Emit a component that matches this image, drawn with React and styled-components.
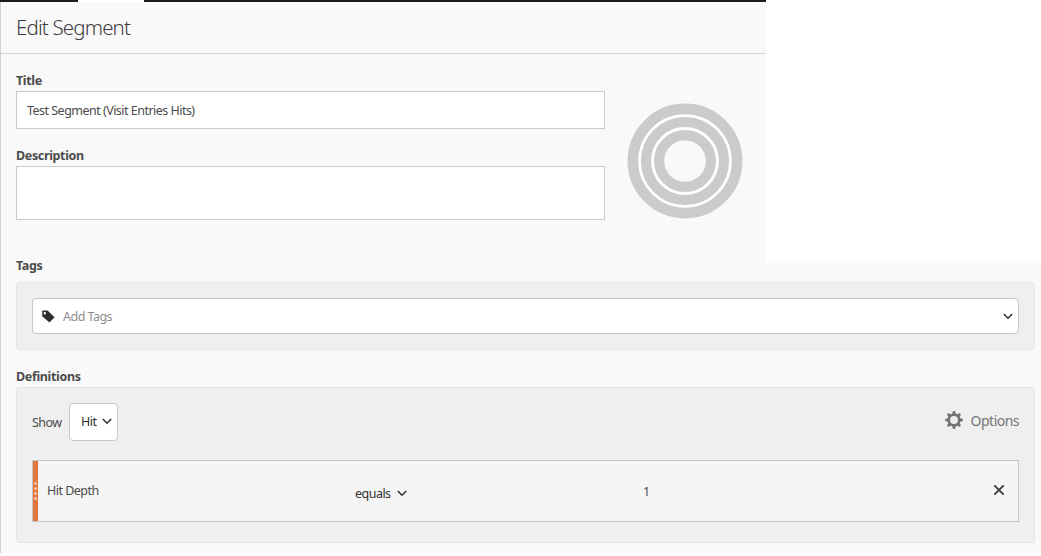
import React from 'react';
import styled, { createGlobalStyle, css } from 'styled-components';

function Chevron() {
  return (
    <svg width="10" height="7" viewBox="0 0 10 7">
      <path d="M0.8 1 L5 5.2 L9.2 1" fill="none" stroke="#2e2e2e" strokeWidth="1.5" />
    </svg>
  );
}

function TagIcon() {
  return (
    <svg width="13" height="13" viewBox="0 0 13 13">
      <path
        fillRule="evenodd"
        d="M0.8 0.6 H5.6 L12.2 7 Q12.6 7.4 12.2 7.8 L7.9 12.1 Q7.4 12.6 6.9 12.1 L0.2 6.3 V1.2 Q0.2 0.6 0.8 0.6 Z M2.8 2 A1.2 1.2 0 1 0 2.8 4.4 A1.2 1.2 0 1 0 2.8 2 Z"
        fill="#2b2d2e"
      />
    </svg>
  );
}

const teeth = [0, 45, 90, 135, 180, 225, 270, 315];

function GearIcon() {
  return (
    <svg width="18" height="18" viewBox="-9 -9 18 18">
      <circle r="5.3" fill="none" stroke="#757575" strokeWidth="2.7" />
      {teeth.map((angle) => (
        <path
          key={angle}
          d="M-1.8 -6 L-1 -8.9 H1 L1.8 -6 Z"
          fill="#757575"
          transform={`rotate(${angle})`}
        />
      ))}
    </svg>
  );
}

function CloseIcon() {
  return (
    <svg width="12" height="12" viewBox="0 0 12 12">
      <path d="M1.3 1.3 L10.7 10.7 M10.7 1.3 L1.3 10.7" stroke="#3c3c3c" strokeWidth="1.9" />
    </svg>
  );
}

function Rings() {
  return (
    <svg width="116" height="116" viewBox="0 0 116 116">
      <circle cx="58" cy="58" r="50" fill="#ffffff" />
      <circle cx="58" cy="58" r="21" fill="#f9f9f9" />
      <g fill="none" stroke="#cbcbcb">
        <circle cx="58" cy="58" r="52.1" strokeWidth="10.7" />
        <circle cx="58" cy="58" r="39" strokeWidth="10.2" />
        <circle cx="58" cy="58" r="25.9" strokeWidth="10.2" />
      </g>
    </svg>
  );
}

function App() {
  return (
    <>
      <GlobalStyle />
      <TopBar>
        <ActiveTab />
      </TopBar>
      <Summary>
        <Header>
          <Heading>Edit Segment</Heading>
        </Header>
        <SummaryBody>
          <Fields>
            <Label>Title</Label>
            <TitleBox>Test Segment (Visit Entries Hits)</TitleBox>
            <Label>Description</Label>
            <DescriptionBox />
          </Fields>
          <Rings />
        </SummaryBody>
      </Summary>
      <Builder>
        <Label>Tags</Label>
        <TagsPanel>
          <TagsInput>
            <TagIcon />
            <Placeholder>Add Tags</Placeholder>
            <Chevron />
          </TagsInput>
        </TagsPanel>
        <Label>Definitions</Label>
        <DefinitionsPanel>
          <Toolbar>
            <Show>Show</Show>
            <Select>
              <span>Hit</span>
              <Chevron />
            </Select>
            <Options>
              <GearIcon />
              <span>Options</span>
            </Options>
          </Toolbar>
          <Rule>
            <Grip>
              <Dot />
              <Dot />
              <Dot />
              <Dot />
            </Grip>
            <Metric>Hit Depth</Metric>
            <Operator>
              <span>equals</span>
              <Chevron />
            </Operator>
            <Value>1</Value>
            <CloseIcon />
          </Rule>
        </DefinitionsPanel>
      </Builder>
    </>
  );
}

export default App;

const GlobalStyle = createGlobalStyle`
  * {
    box-sizing: border-box;
  }

  body {
    margin: 0;
    background: #ffffff;
    color: #4b4b4b;
    font-family: 'Noto Sans', 'Open Sans', sans-serif;
    font-size: 12.5px;
    letter-spacing: -0.52px;
  }

  svg {
    display: block;
    flex-shrink: 0;
  }
`;

const Surface = css`
  border-left: 1px solid #d0d0d0;
  background: #f9f9f9;
`;

const TopBar = styled.div`
  width: 766px;
  height: 2px;
  padding-left: 78px;
  background: #1c1a1b;
`;

const ActiveTab = styled.div`
  width: 66px;
  height: 2px;
  background: #ffffff;
`;

const Summary = styled.section`
  ${Surface}
  width: 766px;
  height: 261px;
`;

const Header = styled.header`
  height: 52px;
  padding-left: 15px;
  border-bottom: 1px solid #d6d6d6;
`;

const Heading = styled.h1`
  margin: 0;
  color: #3b3b3b;
  font-size: 20.5px;
  font-weight: 300;
  line-height: 51px;
  letter-spacing: -0.85px;
`;

const SummaryBody = styled.div`
  display: flex;
  padding-left: 15px;

  > svg {
    margin: 49px 0 0 22px;
  }
`;

const Fields = styled.div`
  width: 589px;
  padding-top: 18px;
`;

const Label = styled.div`
  height: 19px;
  color: #4b4b4b;
  font-size: 12.5px;
  font-weight: 700;
  line-height: 17px;
  letter-spacing: -0.35px;
`;

const TitleBox = styled.div`
  height: 38px;
  margin-bottom: 18px;
  padding-left: 10px;
  border: 1px solid #cacaca;
  background: #ffffff;
  line-height: 37px;
`;

const DescriptionBox = styled.div`
  height: 54px;
  border: 1px solid #cacaca;
  background: #ffffff;
`;

const Builder = styled.section`
  ${Surface}
  display: flow-root;
  width: 1041px;
  height: 290px;
  padding: 0 6px 0 15px;

  > ${Label}:first-child {
    margin-top: -6px;
    height: 25px;
  }
`;

const Panel = css`
  border: 1px solid #e5e5e5;
  border-radius: 3px;
  background: #efefef;
`;

const TagsPanel = styled.div`
  ${Panel}
  height: 68px;
  margin-bottom: 18px;
  padding: 15px;
`;

const TagsInput = styled.div`
  display: flex;
  align-items: center;
  height: 36px;
  padding: 0 5px 0 9px;
  border: 1px solid #c8c8c8;
  border-radius: 4px;
  background: #ffffff;
`;

const Placeholder = styled.span`
  flex: 1;
  padding-left: 8px;
  color: #8e8e8e;
`;

const DefinitionsPanel = styled.div`
  ${Panel}
  height: 156px;
  padding: 15px;
`;

const Toolbar = styled.div`
  display: flex;
  height: 38px;
  margin-bottom: 19px;
`;

const Show = styled.span`
  width: 37px;
  line-height: 39px;
`;

const Select = styled.div`
  display: flex;
  align-items: center;
  justify-content: space-between;
  width: 49px;
  height: 38px;
  padding: 0 5px 2px 11px;
  border: 1px solid #c8c8c8;
  border-radius: 4px;
  background: #ffffff;
  color: #2e2e2e;
`;

const Options = styled.div`
  display: flex;
  align-items: center;
  gap: 8px;
  height: 34px;
  margin-left: auto;
  color: #757575;
  font-size: 14px;
`;

const Rule = styled.div`
  display: flex;
  align-items: center;
  height: 62px;
  padding-right: 13px;
  border: 1px solid #c4c4c4;
  background: #f5f5f5;

  > svg {
    margin-bottom: 2px;
  }
`;

const Grip = styled.div`
  display: flex;
  flex-direction: column;
  align-items: center;
  justify-content: center;
  gap: 2px;
  width: 5px;
  height: 60px;
  background: #e4783c;
`;

const Dot = styled.i`
  width: 3px;
  height: 3px;
  border-radius: 50%;
  background: #f6c8ad;
`;

const Metric = styled.span`
  width: 317px;
  padding: 0 0 2px 9px;
`;

const Operator = styled.div`
  display: flex;
  align-items: center;
  gap: 6px;
  width: 288px;
  padding-top: 4px;
  color: #333333;
`;

const Value = styled.span`
  flex: 1;
`;
